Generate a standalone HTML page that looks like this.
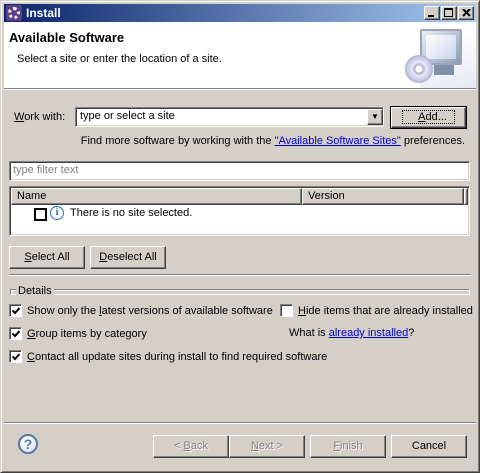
<!DOCTYPE html>
<html><head><style>
*{margin:0;padding:0;box-sizing:border-box}
body{width:480px;height:473px;overflow:hidden;background:#d4d0c8;font:11px "Liberation Sans",Arial,sans-serif;color:#000;position:relative}
.a{position:absolute;white-space:nowrap}
.win{position:absolute;left:0;top:0;width:480px;height:473px;border:1px solid;border-color:#d4d0c8 #404040 #404040 #d4d0c8;box-shadow:inset 1px 1px 0 #fff,inset -1px -1px 0 #808080}
.title{left:4px;top:4px;width:472px;height:18px;background:linear-gradient(90deg,#0a246a,#a6caf0)}
.tb{top:2px;width:16px;height:14px;background:#d4d0c8;border:1px solid;border-color:#fff #404040 #404040 #fff;box-shadow:inset -1px -1px 0 #808080}
.btn{height:23px;background:#d4d0c8;border:1px solid;border-color:#fff #404040 #404040 #fff;box-shadow:inset -1px -1px 0 #808080;text-align:center;line-height:20px}
.sunk{border:1px solid;border-color:#808080 #fff #fff #808080;box-shadow:inset 1px 1px 0 #404040,inset -1px -1px 0 #d4d0c8;background:#fff}
.cb{width:13px;height:13px;border:1px solid;border-color:#808080 #fff #fff #808080;box-shadow:inset 1px 1px 0 #404040;background:#fff}
.cb svg{position:absolute;left:2px;top:2px}
.sep{height:2px;border-top:1px solid #808080;border-bottom:1px solid #fff}
.dis{color:#808080;text-shadow:1px 1px 0 #fff}
a{color:#0000cc;text-decoration:underline}
</style></head><body>
<div class="win"></div>
<div class="a title">
 <div class="a" style="left:2px;top:1px;width:16px;height:16px;background:#5a3e8a;border-radius:2px"><div class="a" style="left:2px;top:2px;width:12px;height:12px;border:3px dotted #eee;border-radius:50%"></div></div>
 <div class="a" style="left:22px;top:2px;color:#fff;font-weight:bold;font-size:12px">Install</div>
 <div class="a tb" style="left:420px"><div class="a" style="left:3px;top:8px;width:6px;height:2px;background:#000"></div></div>
 <div class="a tb" style="left:437px"><div class="a" style="left:2px;top:1px;width:9px;height:9px;border:1px solid #000;border-top-width:2px"></div></div>
 <div class="a tb" style="left:454px"><svg class="a" style="left:3px;top:2px" width="9" height="8"><path d="M1 0L8 7M8 0L1 7" stroke="#000" stroke-width="2"/></svg></div>
</div>
<div class="a" style="left:4px;top:22px;width:472px;height:67px;background:#fff"></div>
<div class="a" style="left:420px;top:23px;width:56px;height:66px;background:linear-gradient(160deg,#fff 30%,#e4e9f4)"></div>
<div class="a" style="left:420px;top:29px;width:42px;height:36px;background:linear-gradient(135deg,#e8eef8,#8e9cb4);border:2px solid #9aa6b8;border-radius:2px"><div style="margin:4px;height:24px;background:linear-gradient(135deg,#fff,#c8d4ec)"></div></div>
<div class="a" style="left:434px;top:65px;width:20px;height:10px;background:#8090a8"></div>
<div class="a" style="left:405px;top:55px;width:28px;height:28px;border-radius:50%;background:radial-gradient(circle,#fff 3px,#b0b0c8 4px,#e8e8f8 7px,#c0c8e8 12px,#a8a8c0 14px)"></div>
<div class="a" style="left:9px;top:30px;font-weight:bold;font-size:13px">Available Software</div>
<div class="a" style="left:17px;top:53px">Select a site or enter the location of a site.</div>
<div class="a sep" style="left:4px;top:88px;width:472px"></div>

<div class="a" style="left:14px;top:111px"><u>W</u>ork with:</div>
<div class="a sunk" style="left:75px;top:107px;width:309px;height:20px"></div>
<div class="a" style="left:80px;top:110px">type or select a site</div>
<div class="a btn" style="left:367px;top:109px;width:16px;height:16px;font-size:8px;line-height:14px">▼</div>
<div class="a" style="left:390px;top:106px;width:77px;height:23px;border:1px solid #000"></div>
<div class="a btn" style="left:391px;top:107px;width:75px;height:21px;line-height:18px"><span style="outline:1px dotted #000;padding:0 7px 0 15px"><u>A</u>dd...</span></div>
<div class="a" style="right:15px;top:135px">Find more software by working with the <a>"Available Software Sites"</a> preferences.</div>
<div class="a sunk" style="left:9px;top:161px;width:461px;height:20px"></div>
<div class="a" style="left:13px;top:164px;color:#808080">type filter text</div>
<div class="a sunk" style="left:9px;top:186px;width:461px;height:50px"></div>
<div class="a btn" style="left:11px;top:188px;width:291px;height:17px;text-align:left;padding-left:5px;line-height:14px">Name</div>
<div class="a btn" style="left:302px;top:188px;width:162px;height:17px;text-align:left;padding-left:5px;line-height:14px">Version</div>
<div class="a btn" style="left:464px;top:188px;width:4px;height:17px"></div>
<div class="a" style="left:34px;top:208px;width:13px;height:13px;border:2px solid #000;background:#fff"></div>
<div class="a" style="left:50px;top:206px;width:14px;height:14px;border:1.5px solid #2a6cc0;border-radius:50%;color:#2a6cc0;font:bold 10px 'Liberation Serif',serif;text-align:center;line-height:11px">i</div>
<div class="a" style="left:70px;top:207px">There is no site selected.</div>
<div class="a btn" style="left:9px;top:246px;width:76px"><u>S</u>elect All</div>
<div class="a btn" style="left:90px;top:246px;width:76px"><u>D</u>eselect All</div>
<div class="a sep" style="left:9px;top:274px;width:462px"></div>

<div class="a" style="left:10px;top:289px;width:460px;height:6px;border:1px solid;border-color:#808080 #fff #fff #808080;box-shadow:inset 1px 1px 0 #fff"></div>
<div class="a" style="left:16px;top:285px;background:#d4d0c8;padding:0 2px">Details</div>
<div class="a cb" style="left:9px;top:304px"><svg width="8" height="8"><path d="M0.5 3.5L3 6L7.5 1" stroke="#000" stroke-width="2" fill="none"/></svg></div>
<div class="a" style="left:27px;top:305px">Show only the <u>l</u>atest versions of available software</div>
<div class="a cb" style="left:280px;top:304px"></div>
<div class="a" style="left:298px;top:305px"><u>H</u>ide items that are already installed</div>
<div class="a cb" style="left:9px;top:327px"><svg width="8" height="8"><path d="M0.5 3.5L3 6L7.5 1" stroke="#000" stroke-width="2" fill="none"/></svg></div>
<div class="a" style="left:27px;top:328px"><u>G</u>roup items by category</div>
<div class="a" style="left:289px;top:327px">What is <a>already installed</a>?</div>
<div class="a cb" style="left:9px;top:350px"><svg width="8" height="8"><path d="M0.5 3.5L3 6L7.5 1" stroke="#000" stroke-width="2" fill="none"/></svg></div>
<div class="a" style="left:27px;top:351px"><u>C</u>ontact all update sites during install to find required software</div>

<div class="a sep" style="left:4px;top:422px;width:472px"></div>
<div class="a" style="left:18px;top:434px;width:20px;height:20px;border:2px solid #5a78a8;border-radius:50%;background:radial-gradient(circle at 40% 35%,#fff,#d8e0ee);color:#5a78a8;font:bold 14px 'Liberation Sans',sans-serif;text-align:center;line-height:17px">?</div>
<div class="a btn dis" style="left:153px;top:435px;width:76px">&lt; <u>B</u>ack</div>
<div class="a btn dis" style="left:229px;top:435px;width:76px"><u>N</u>ext &gt;</div>
<div class="a btn dis" style="left:310px;top:435px;width:76px"><u>F</u>inish</div>
<div class="a btn" style="left:391px;top:435px;width:76px">Cancel</div>
</body></html>
